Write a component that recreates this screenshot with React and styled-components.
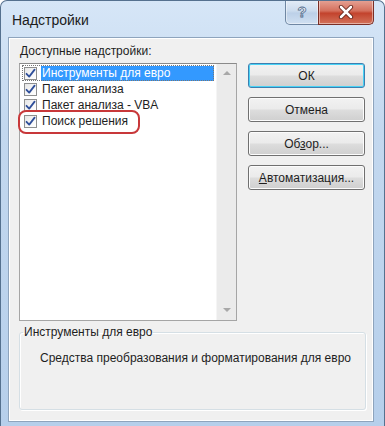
import styled, { createGlobalStyle } from "styled-components";

const GlobalStyle = createGlobalStyle`
  html, body {
    margin: 0;
    padding: 0;
    background: #ffffff;
  }
  * {
    box-sizing: border-box;
  }
`;

const Window = styled.div`
  width: 385px;
  height: 426px;
  display: flex;
  flex-direction: column;
  border: 1px solid #55718f;
  border-bottom: none;
  border-radius: 7px 7px 0 0;
  background: linear-gradient(to bottom, #d6e6f7 0%, #c3d8ef 30%, #b6cfeb 100%);
  padding: 0 10px 4px 7px;
  font-family: "Liberation Sans", Arial, sans-serif;
  overflow: hidden;
`;

const TitleBar = styled.div`
  height: 36px;
  display: flex;
  align-items: flex-start;
  justify-content: space-between;
  flex-shrink: 0;
  h1 {
    margin: 11px 0 0 4px;
    font: normal normal 400 14px/16px "Liberation Sans", Arial, sans-serif;
    color: #1b1b1b;
  }
`;

const Caption = styled.div`
  display: flex;
  margin-top: -1px;
`;

const CaptionButton = styled.div`
  width: ${(p) => p.w}px;
  height: 25px;
  display: flex;
  align-items: center;
  justify-content: center;
  border: 1px solid ${(p) => (p.close ? "#7a2e25" : "#6f87a3")};
  border-top: none;
  border-radius: ${(p) => (p.close ? "0 0 5px 0" : "0 0 0 5px")};
  background: ${(p) =>
    p.close
      ? "linear-gradient(to bottom, #e6a497 0%, #d4705d 45%, #c3432d 55%, #d2725a 100%)"
      : "linear-gradient(to bottom, #e4edf7 0%, #ccdcee 45%, #bcd0e8 55%, #d0e0f1 100%)"};
  box-shadow: inset 0 0 0 1px rgba(255, 255, 255, 0.45);
  margin-left: ${(p) => (p.close ? "-1px" : "0")};
`;

const Panel = styled.div`
  flex: 1;
  background: #f0f0f0;
  border: 1px solid #8ea4bd;
  box-shadow: inset 1px 1px 0 #ffffff, inset -1px -1px 0 #ffffff;
  padding: 5px 8px 0 10px;
  display: flex;
  flex-direction: column;
`;

const Top = styled.div`
  display: flex;
  gap: 11px;
`;

const LeftColumn = styled.div`
  display: flex;
  flex-direction: column;
  width: 219px;
`;

const Label = styled.div`
  font-size: 12px;
  line-height: 16px;
  color: #1e1e1e;
  padding-left: 1px;
  margin-bottom: 4px;
`;

const ListBox = styled.div`
  height: 258px;
  background: #ffffff;
  border: 1px solid #a5a5a5;
  border-top-color: #8a8a8a;
  display: flex;
  position: relative;
`;

const Items = styled.div`
  flex: 1;
  padding: 1px 2px 0 2px;
`;

const Item = styled.div`
  height: 16px;
  display: flex;
  align-items: center;
  gap: 4px;
  outline: ${(p) => (p.focused ? "1px dotted #777" : "none")};
  outline-offset: -1px;
  span {
    flex: 1;
    height: 15px;
    display: flex;
    align-items: center;
    padding-left: 1px;
    font-size: 12px;
    color: ${(p) => (p.selected ? "#ffffff" : "#1e1e1e")};
    background: ${(p) => (p.selected ? "#3399ff" : "transparent")};
  }
`;

const Box = styled.div`
  width: 13px;
  height: 13px;
  margin-left: 2px;
  border: 1px solid #8e8f8f;
  background: linear-gradient(135deg, #e6e6e6 0%, #f8f8f8 60%, #ffffff 100%);
  display: flex;
  align-items: center;
  justify-content: center;
  flex-shrink: 0;
`;

const Highlight = styled.div`
  position: absolute;
  left: -2px;
  top: 46px;
  width: 122px;
  height: 24px;
  border: 2px solid #c8383a;
  border-radius: 8px;
  pointer-events: none;
`;

const ScrollBar = styled.div`
  width: 20px;
  background: #ebebeb;
  border-left: 1px solid #f5f5f5;
  display: flex;
  flex-direction: column;
  justify-content: space-between;
  align-items: center;
  padding: 7px 0 8px 0;
`;

const Arrow = styled.div`
  width: 0;
  height: 0;
  border-left: 4px solid transparent;
  border-right: 4px solid transparent;
  ${(p) =>
    p.down
      ? "border-top: 4px solid #a8a8a8;"
      : "border-bottom: 4px solid #a8a8a8;"}
`;

const Buttons = styled.div`
  display: flex;
  flex-direction: column;
  gap: 9px;
  padding-top: 20px;
`;

const Button = styled.button`
  width: 117px;
  height: 25px;
  border: 1px solid ${(p) => (p.primary ? "#3c7fb1" : "#707070")};
  border-radius: 3px;
  background: linear-gradient(to bottom, #f2f2f2 0%, #ebebeb 48%, #dddddd 52%, #cfcfcf 100%);
  box-shadow: inset 0 0 0 1px ${(p) => (p.primary ? "#48d2f5" : "#fcfcfc")};
  font: normal normal 400 12px/14px "Liberation Sans", Arial, sans-serif;
  color: #1e1e1e;
  padding: 0;
  u {
    text-decoration: underline;
  }
`;

const Group = styled.fieldset`
  margin: 4px 0 0 0;
  height: 85px;
  width: 347px;
  border: 1px solid #d5dfe5;
  border-radius: 3px;
  box-shadow: inset 1px 1px 0 #ffffff, 1px 1px 0 #ffffff;
  padding: 12px 0 0 20px;
  legend {
    font-size: 12px;
    color: #1e1e1e;
    padding: 0 1px;
    margin-left: -17px;
  }
  p {
    margin: 0;
    font-size: 12px;
    color: #1e1e1e;
  }
`;

const Check = () => (
  <svg width="11" height="11" viewBox="0 0 11 11">
    <path
      d="M1.5 5.8 L4.2 8.6 L9.6 1.6"
      fill="none"
      stroke="#2f4f9a"
      strokeWidth="1.8"
      strokeLinecap="round"
      strokeLinejoin="round"
    />
  </svg>
);

const items = [
  "Инструменты для евро",
  "Пакет анализа",
  "Пакет анализа - VBA",
  "Поиск решения",
];

export default function App() {
  return (
    <>
      <GlobalStyle />
      <Window>
        <TitleBar>
          <h1>Надстройки</h1>
          <Caption>
            <CaptionButton w={34}>
              <svg width="14" height="16" viewBox="0 0 14 16">
                <text
                  x="7"
                  y="13"
                  textAnchor="middle"
                  fontFamily="Liberation Sans, Arial, sans-serif"
                  fontWeight="700"
                  fontSize="15"
                  fill="#f4f8fc"
                  stroke="#4f6a8a"
                  strokeWidth="0.8"
                >
                  ?
                </text>
              </svg>
            </CaptionButton>
            <CaptionButton w={56} close>
              <svg width="16" height="14" viewBox="0 0 16 14">
                <path
                  d="M3 2 L13 12 M13 2 L3 12"
                  stroke="#5a1b12"
                  strokeWidth="4.2"
                  strokeLinecap="round"
                />
                <path
                  d="M3 2 L13 12 M13 2 L3 12"
                  stroke="#ffffff"
                  strokeWidth="2.6"
                  strokeLinecap="round"
                />
              </svg>
            </CaptionButton>
          </Caption>
        </TitleBar>
        <Panel>
          <Top>
            <LeftColumn>
              <Label>Доступные надстройки:</Label>
              <ListBox>
                <Items>
                  {items.map((t, i) => (
                    <Item key={t} selected={i === 0} focused={i === 0}>
                      <Box>
                        <Check />
                      </Box>
                      <span>{t}</span>
                    </Item>
                  ))}
                </Items>
                <ScrollBar>
                  <Arrow />
                  <Arrow down />
                </ScrollBar>
                <Highlight />
              </ListBox>
            </LeftColumn>
            <Buttons>
              <Button primary>ОК</Button>
              <Button>Отмена</Button>
              <Button>
                Об<u>з</u>ор...
              </Button>
              <Button>
                <u>А</u>втоматизация...
              </Button>
            </Buttons>
          </Top>
          <Group>
            <legend>Инструменты для евро</legend>
            <p>Средства преобразования и форматирования для евро</p>
          </Group>
        </Panel>
      </Window>
    </>
  );
}
